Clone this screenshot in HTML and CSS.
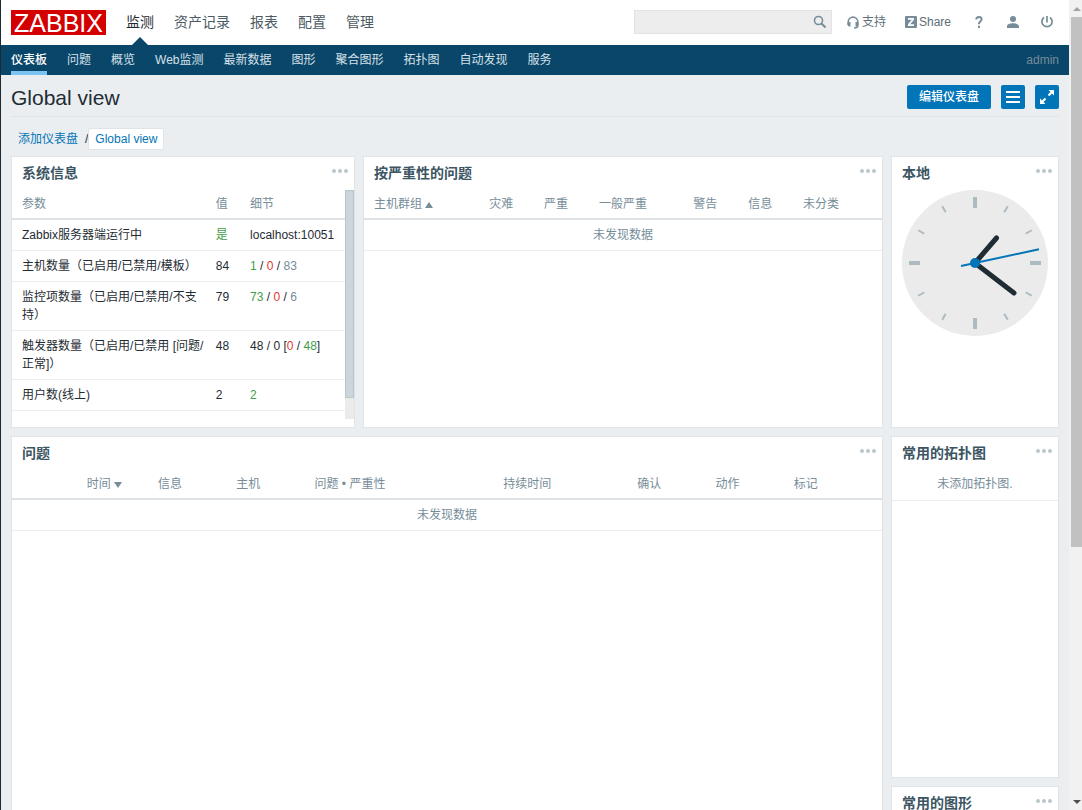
FILE: index.html
```html
<!DOCTYPE html>
<html lang="zh-CN">
<head>
<meta charset="utf-8">
<meta name="viewport" content="width=device-width, initial-scale=1">
<title>Zabbix: 仪表板</title>
<link rel="stylesheet" href="styles.css">
</head>
<body>
<div class="page">
  <header class="topbar">
    <a class="logo" href="#">ZABBIX</a>
    <nav class="main-nav">
      <a class="selected" href="#">监测</a>
      <a href="#">资产记录</a>
      <a href="#">报表</a>
      <a href="#">配置</a>
      <a href="#">管理</a>
    </nav>
    <form class="search">
      <input type="text" aria-label="搜索">
      <button type="button" aria-label="搜索">
        <svg width="14" height="14" viewBox="0 0 14 14" fill="none" stroke="#768d99"><circle cx="5.5" cy="5.5" r="4" stroke-width="1.6"/><path d="M8.5 8.5l4 4" stroke-width="2"/></svg>
      </button>
    </form>
    <a class="tool support" href="#">
      <svg width="12" height="13" viewBox="0 0 12 13"><path d="M1.2 9V5.9a4.800 4.800 0 0 1 9.600 0V9.500q0 2.500-3.800 2.500" fill="none" stroke="#768d99" stroke-width="1.600"/><path d="M.6 6h2.900v4.500H2.200Q.6 10.500.6 8.800zM11.400 6H8.500v4.500h1.300q1.600 0 1.600-1.700z" fill="#768d99"/></svg>
      <span>支持</span>
    </a>
    <a class="tool share" href="#">
      <svg width="12" height="12" viewBox="0 0 12 12"><rect width="12" height="12" rx="1" fill="#768d99"/><path d="M3 2h6v1.800L5.200 8.300H9V10H3V8.200l3.700-4.500H3z" fill="#fff"/></svg>
      <span>Share</span>
    </a>
    <a class="tool help" href="#" aria-label="帮助">
      <svg width="8" height="12" viewBox="0 0 8 12"><path d="M1.200 3.500Q1.200 1 3.900 1t2.700 2.300c0 2-2.700 2.300-2.700 4.500v.500" fill="none" stroke="#768d99" stroke-width="1.900"/><path d="M3 9.800h2V12H3z" fill="#768d99"/></svg>
    </a>
    <a class="tool profile" href="#" aria-label="用户资料">
      <svg width="12" height="12" viewBox="0 0 12 12" fill="#768d99"><circle cx="6" cy="3" r="3"/><path d="M0 12V10.200C0 8 3.500 7.300 6 7.300s6 .700 6 2.900V12z"/></svg>
    </a>
    <a class="tool signout" href="#" aria-label="退出">
      <svg width="12" height="12" viewBox="0 0 12 12" fill="none" stroke="#768d99" stroke-width="1.700"><path d="M6 0v6.500M3 1.500a5.100 5.100 0 1 0 6 0"/></svg>
    </a>
  </header>

  <div class="subbar">
    <nav class="sub-nav">
      <a class="selected" href="#">仪表板</a>
      <a href="#">问题</a>
      <a href="#">概览</a>
      <a href="#">Web监测</a>
      <a href="#">最新数据</a>
      <a href="#">图形</a>
      <a href="#">聚合图形</a>
      <a href="#">拓扑图</a>
      <a href="#">自动发现</a>
      <a href="#">服务</a>
    </nav>
    <span class="user">admin</span>
  </div>

  <main class="content">
    <div class="title-row">
      <h1>Global view</h1>
      <button class="btn" type="button">编辑仪表盘</button>
      <button class="btn btn-icon" type="button" aria-label="操作">
        <svg width="14" height="12" viewBox="0 0 14 12" fill="#fff"><path d="M0 0h14v2H0zM0 5h14v2H0zM0 10h14v2H0z"/></svg>
      </button>
      <button class="btn btn-icon" type="button" aria-label="全屏">
        <svg width="14" height="14" viewBox="0 0 14 14"><path d="M8.500 0H14v5.500zM0 8.500V14h5.500z" fill="#fff"/><path d="M12 2L8.500 5.500M2 12l3.500-3.500" stroke="#fff" stroke-width="2.200"/></svg>
      </button>
    </div>

    <nav class="crumbs">
      <a href="#">添加仪表盘</a>
      <span>/</span>
      <a class="current" href="#">Global view</a>
    </nav>

    <div class="dashboard">
      <section class="widget w-system">
        <div class="widget-head">
          <h2>系统信息</h2>
          <button type="button" class="dots" aria-label="操作"><svg width="16" height="4" viewBox="0 0 16 4" fill="#b9c6cc"><circle cx="2" cy="2" r="2"/><circle cx="8" cy="2" r="2"/><circle cx="14" cy="2" r="2"/></svg></button>
        </div>
        <div class="scroll-area">
          <table>
            <colgroup><col class="c-param"><col class="c-value"><col></colgroup>
            <thead><tr><th>参数</th><th>值</th><th>细节</th></tr></thead>
            <tbody>
              <tr><td>Zabbix服务器端运行中</td><td class="green">是</td><td>localhost:10051</td></tr>
              <tr><td>主机数量（已启用/已禁用/模板）</td><td>84</td><td><span class="green">1</span> / <span class="red">0</span> / <span class="grey">83</span></td></tr>
              <tr><td>监控项数量（已启用/已禁用/不支持）</td><td>79</td><td><span class="green">73</span> / <span class="red">0</span> / <span class="grey">6</span></td></tr>
              <tr><td>触发器数量（已启用/已禁用 [问题/正常]）</td><td>48</td><td>48 / 0 [<span class="red">0</span> / <span class="green">48</span>]</td></tr>
              <tr><td>用户数(线上)</td><td>2</td><td class="green">2</td></tr>
            </tbody>
          </table>
          <div class="inner-bar" aria-hidden="true"><div></div></div>
        </div>
      </section>

      <section class="widget w-severity">
        <div class="widget-head">
          <h2>按严重性的问题</h2>
          <button type="button" class="dots" aria-label="操作"><svg width="16" height="4" viewBox="0 0 16 4" fill="#b9c6cc"><circle cx="2" cy="2" r="2"/><circle cx="8" cy="2" r="2"/><circle cx="14" cy="2" r="2"/></svg></button>
        </div>
        <table>
          <colgroup><col class="s-group"><col class="s-short"><col class="s-short"><col class="s-average"><col class="s-short"><col class="s-short"><col></colgroup>
          <thead><tr><th>主机群组<span class="sort-up"></span></th><th>灾难</th><th>严重</th><th>一般严重</th><th>警告</th><th>信息</th><th>未分类</th></tr></thead>
          <tbody><tr><td class="nothing" colspan="7">未发现数据</td></tr></tbody>
        </table>
      </section>

      <section class="widget w-clock">
        <div class="widget-head">
          <h2>本地</h2>
          <button type="button" class="dots" aria-label="操作"><svg width="16" height="4" viewBox="0 0 16 4" fill="#b9c6cc"><circle cx="2" cy="2" r="2"/><circle cx="8" cy="2" r="2"/><circle cx="14" cy="2" r="2"/></svg></button>
        </div>
        <div class="clock">
          <svg viewBox="-73 -73 146 146">
            <circle r="73" fill="#ebebeb"/>
            <g stroke="#acbbc2" stroke-width="4">
              <path d="M0-66v11M66 0H55M0 66V55M-66 0h11"/>
            </g>
            <g stroke="#acbbc2" stroke-width="2">
              <path d="M0-65.500v7" transform="rotate(30)"/><path d="M0-65.500v7" transform="rotate(60)"/>
              <path d="M0-65.500v7" transform="rotate(120)"/><path d="M0-65.500v7" transform="rotate(150)"/>
              <path d="M0-65.500v7" transform="rotate(210)"/><path d="M0-65.500v7" transform="rotate(240)"/>
              <path d="M0-65.500v7" transform="rotate(300)"/><path d="M0-65.500v7" transform="rotate(330)"/>
            </g>
            <path d="M0 0L21.500-25M0 0l39 30" stroke="#1f2c33" stroke-width="5" stroke-linecap="round"/>
            <path d="M-14 3L64-13.700" stroke="#0275b8" stroke-width="2"/>
            <circle r="5" fill="#0275b8"/>
          </svg>
        </div>
      </section>

      <section class="widget w-problems">
        <div class="widget-head">
          <h2>问题</h2>
          <button type="button" class="dots" aria-label="操作"><svg width="16" height="4" viewBox="0 0 16 4" fill="#b9c6cc"><circle cx="2" cy="2" r="2"/><circle cx="8" cy="2" r="2"/><circle cx="14" cy="2" r="2"/></svg></button>
        </div>
        <table>
          <colgroup><col class="p-time"><col class="p-gap"><col class="p-short"><col class="p-short"><col class="p-problem"><col class="p-duration"><col class="p-short"><col class="p-short"><col></colgroup>
          <thead><tr><th class="right">时间<span class="sort-down"></span></th><th></th><th>信息</th><th>主机</th><th>问题 • 严重性</th><th>持续时间</th><th>确认</th><th>动作</th><th>标记</th></tr></thead>
          <tbody><tr><td class="nothing" colspan="9">未发现数据</td></tr></tbody>
        </table>
      </section>

      <section class="widget w-maps">
        <div class="widget-head">
          <h2>常用的拓扑图</h2>
          <button type="button" class="dots" aria-label="操作"><svg width="16" height="4" viewBox="0 0 16 4" fill="#b9c6cc"><circle cx="2" cy="2" r="2"/><circle cx="8" cy="2" r="2"/><circle cx="14" cy="2" r="2"/></svg></button>
        </div>
        <p class="empty">未添加拓扑图.</p>
      </section>

      <section class="widget w-graphs">
        <div class="widget-head">
          <h2>常用的图形</h2>
          <button type="button" class="dots" aria-label="操作"><svg width="16" height="4" viewBox="0 0 16 4" fill="#b9c6cc"><circle cx="2" cy="2" r="2"/><circle cx="8" cy="2" r="2"/><circle cx="14" cy="2" r="2"/></svg></button>
        </div>
      </section>
    </div>
  </main>
</div>
<div class="page-bar" aria-hidden="true">
  <div class="arrow"><svg width="8" height="4" viewBox="0 0 8 4" fill="#a3a3a3"><path d="M0 4l4-4 4 4z"/></svg></div>
  <div class="track"><div class="thumb"></div></div>
  <div class="arrow"><svg width="8" height="4" viewBox="0 0 8 4" fill="#505050"><path d="M0 0h8L4 4z"/></svg></div>
</div>
</body>
</html>
```

FILE: styles.css
```css
* { box-sizing: border-box; }

body {
  margin: 0;
  height: 100vh;
  display: flex;
  overflow: hidden;
  background: #ebeef0;
  color: #1f2c33;
  font: 12px/18px "Liberation Sans", "Noto Sans CJK SC", sans-serif;
}

a { color: #0275b8; text-decoration: none; }
button { font: inherit; border: 0; padding: 0; background: none; cursor: pointer; }
svg { display: block; }
h1, h2, p { margin: 0; }

.page {
  flex: 1;
  min-width: 0;
  overflow: hidden;
  border-left: 1px solid #1b2a33;
}

/* Header */
.topbar {
  display: flex;
  align-items: center;
  height: 45px;
  padding: 0 16px 1px 10px;
  background: #fff;
}
.logo {
  width: 95px;
  height: 25px;
  margin-right: 20px;
  background: #d40000;
  color: #fff;
  font-size: 25px;
  line-height: 26px;
  text-align: center;
}
.main-nav { display: flex; gap: 20px; align-self: flex-start; }
.main-nav a {
  position: relative;
  height: 45px;
  color: #4c5b63;
  font-size: 14px;
  line-height: 44px;
}
.main-nav a.selected { color: #1f2c33; }
.main-nav a.selected::after {
  content: "";
  position: absolute;
  left: 50%;
  bottom: 0;
  margin-left: -8px;
  border: 8px solid transparent;
  border-top: 0;
  border-bottom-color: #0a466a;
}
.search {
  display: flex;
  align-items: center;
  width: 198px;
  height: 24px;
  margin-left: auto;
  padding-right: 4px;
  background: #ededed;
  border: 1px solid #e3e3e3;
}
.search input {
  flex: 1;
  min-width: 0;
  border: 0;
  outline: 0;
  background: none;
  font: inherit;
}
.tool { display: flex; align-items: center; color: #5d6e77; }
.support { margin-left: 15px; gap: 3px; }
.share { margin-left: 19px; gap: 2px; }
.help { margin-left: 24px; }
.profile { margin-left: 24px; }
.signout { margin-left: 22px; }

/* Second level menu */
.subbar {
  display: flex;
  justify-content: space-between;
  height: 30px;
  padding: 0 10px;
  background: #0a466a;
  line-height: 30px;
}
.sub-nav { display: flex; gap: 20px; }
.sub-nav a { color: #d6e1e8; white-space: nowrap; }
.sub-nav a.selected { color: #fff; border-bottom: 4px solid #7dc3f2; font-weight: 500; }
.user { color: #768d99; }

/* Page title */
.content { padding: 0 10px; }
.title-row {
  display: flex;
  align-items: center;
  gap: 10px;
  height: 42px;
  padding-top: 3px;
  border-bottom: 1px solid #dfe4e7;
}
h1 { flex: 1; font-size: 21px; line-height: 24px; font-weight: 400; padding-top: 2px; }
.btn {
  height: 24px;
  padding: 0 12px;
  border-radius: 2px;
  background: #0275b8;
  color: #fff;
  font-weight: 500;
}
.btn-icon { width: 24px; padding: 0 5px; }

.crumbs {
  display: flex;
  align-items: center;
  padding: 11px 7px 6px;
}
.crumbs span { margin-left: 7px; }
.crumbs .current {
  padding: 1px 6px;
  background: #fff;
  border: 1px solid #dfe4e7;
  border-radius: 2px;
}

/* Widgets */
.dashboard {
  display: grid;
  grid-template-columns: repeat(12, 1fr);
  grid-auto-rows: 62px;
  gap: 8px;
}
.widget {
  display: flex;
  flex-direction: column;
  min-width: 0;
  background: #fff;
  border: 1px solid #dfe4e7;
}
.w-system { grid-area: 1 / 1 / span 4 / span 4; }
.w-severity { grid-area: 1 / 5 / span 4 / span 6; }
.w-clock { grid-area: 1 / 11 / span 4 / span 2; }
.w-problems { grid-area: 5 / 1 / span 10 / span 10; }
.w-maps { grid-area: 5 / 11 / span 5 / span 2; }
.w-graphs { grid-area: 10 / 11 / span 5 / span 2; }

.widget-head {
  display: flex;
  justify-content: space-between;
  align-items: center;
  height: 31px;
  padding: 0 6px 0 10px;
}
.widget-head h2 { color: #3c5563; font-size: 14px; line-height: 30px; font-weight: 700; }
.dots { padding-bottom: 3px; }

.scroll-area { display: flex; align-items: flex-start; flex: 1; }
.inner-bar {
  flex: 0 0 9px;
  align-self: stretch;
  margin: 2px 0 8px;
  background: #ebebeb;
}
.inner-bar div { height: 91%; background: #ccd5db; border: 1px solid #b9c6cc; }

table { width: 100%; table-layout: fixed; border-collapse: separate; border-spacing: 0; }
th, td { padding: 6px 5px; text-align: left; vertical-align: top; }
th:first-child, td:first-child { padding-left: 10px; }
th {
  padding-top: 7px;
  padding-bottom: 5px;
  color: #768d99;
  font-weight: 400;
  border-bottom: 2px solid #dce2e5;
  white-space: nowrap;
}
td { border-bottom: 1px solid #ebeef0; }
th.right { text-align: right; }
.nothing, .empty { text-align: center; color: #768d99; }
td.nothing:first-child { padding-left: 5px; }
.empty { padding: 7px 10px; border-bottom: 1px solid #ebeef0; }

.c-param { width: 59.7%; }
.c-value { width: 10.3%; }
.s-group { width: 23.2%; }
.s-short { width: 10.6%; }
.s-average { width: 18.2%; }
.p-time { width: 13.2%; }
.p-gap { width: 3%; }
.p-short { width: 9%; }
.p-problem { width: 21.7%; }
.p-duration { width: 15.4%; }

.green { color: #429e47; }
.red { color: #e33734; }
.grey { color: #768d99; }

.sort-up, .sort-down {
  display: inline-block;
  margin-left: 3px;
  border: 4px solid transparent;
}
.sort-up { border-top: 0; border-bottom: 6px solid #768d99; }
.sort-down { border-bottom: 0; border-top: 6px solid #768d99; }

.clock { padding: 2px 10px; }
.clock svg { width: 100%; }

/* Window scroll bar */
.page-bar {
  display: flex;
  flex-direction: column;
  flex: 0 0 13px;
  padding-left: 2px;
  background: #f1f1f1;
}
.arrow { display: flex; align-items: center; justify-content: center; height: 17px; }
.track { flex: 1; }
.thumb { height: 68.3%; background: #c1c1c1; }
```
